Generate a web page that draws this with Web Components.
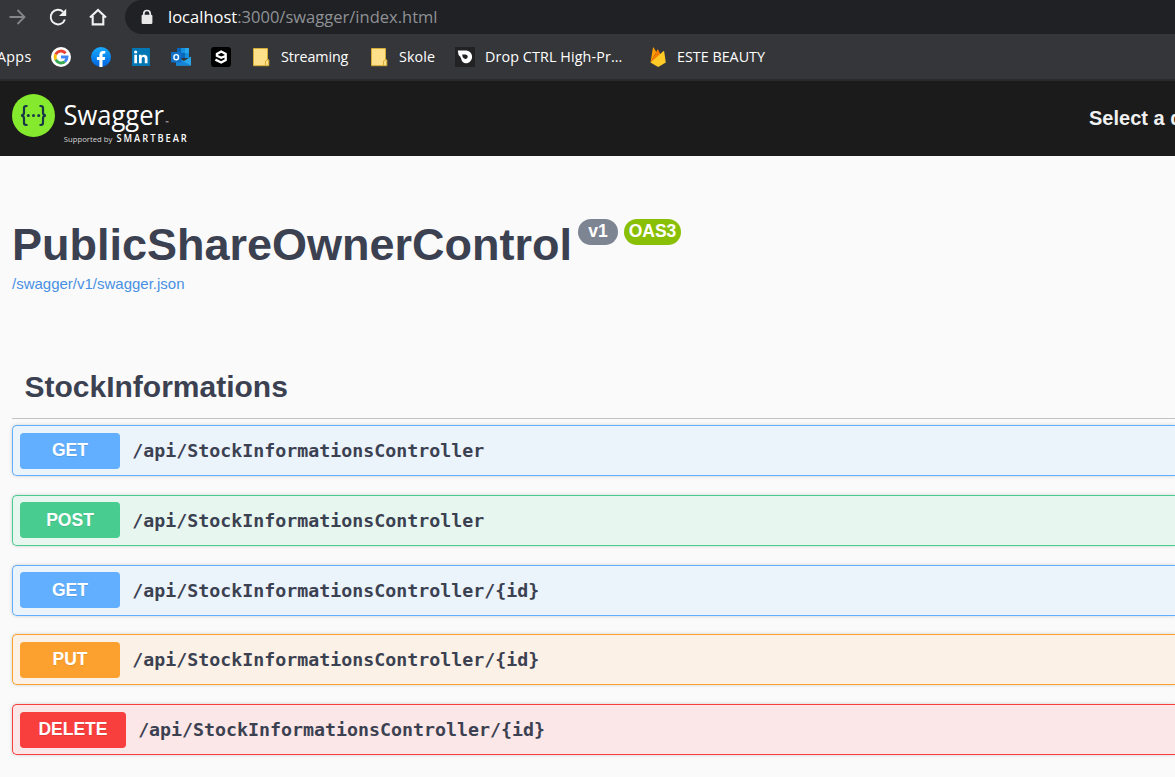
<!DOCTYPE html>
<html lang="en">
<head>
<meta charset="utf-8">
<title>Swagger UI</title>
<style>
html,body{margin:0;height:100%;overflow:hidden;background:#fafafa}
body{font-family:"Liberation Sans",Arial,sans-serif;color:#3b4151}
</style>
</head>
<body>
<app-window></app-window>
<script>
const define=(name,html,init)=>customElements.define(name,class extends HTMLElement{
  connectedCallback(){
    if(this.shadowRoot)return;
    this.attachShadow({mode:"open"}).innerHTML=html;
    if(init)init.call(this,this.shadowRoot);
  }
});

// One line of text whose letter spacing is tuned to a given width.
define("fit-text",`<style>
:host{display:block;white-space:nowrap}
span{display:inline-block}
</style><span><slot></slot></span>`,function(root){
  const s=root.querySelector("span"),n=this.textContent.length;
  const w=s.getBoundingClientRect().width;
  s.style.letterSpacing=((+this.getAttribute("width")-w)/n)+"px";
});

const icons={
forward:`<path d="M1.5 10H16M9.5 3l7 7-7 7" fill="none" stroke="#85868a" stroke-width="1.8"/>`,
reload:`<path d="M16.9 12.5A7.3 7.3 0 1 1 15.2 4.9" fill="none" stroke="#f1f1f2" stroke-width="2"/><path d="M18.2 1.8V9H11z" fill="#f1f1f2"/>`,
home:`<path d="M2 10.6 10 3l8 7.600M4.700 9V17.400H15.300V9" fill="none" stroke="#f1f1f2" stroke-width="2.100"/>`,
lock:`<path d="M6.800 9V6.700a3.200 3.200 0 0 1 6.400 0V9" fill="none" stroke="#e8e8e9" stroke-width="1.700"/><rect x="4.600" y="7.800" width="10.800" height="9.200" rx="1.200" fill="#e8e8e9"/>`,
google:`<circle cx="10" cy="10" r="10" fill="#fff"/><g fill="none" stroke-width="2.900"><path d="M14.600 6.200A6 6 0 0 0 4.700 7.300" stroke="#ea4335"/><path d="M4.700 7.300a6 6 0 0 0 0 5.400" stroke="#fbbc05"/><path d="M4.700 12.700a6 6 0 0 0 9.200 1.900" stroke="#34a853"/><path d="M10 10h6a6 6 0 0 1-2.100 4.600" stroke="#4285f4"/></g>`,
facebook:`<defs><linearGradient id="f" x2="0" y2="1"><stop stop-color="#18acfe"/><stop offset="1" stop-color="#0163e0"/></linearGradient></defs><circle cx="10" cy="10" r="10" fill="url(#f)"/><path d="M8.400 20v-7H5.900v-3h2.500V7.900c0-2.600 1.500-4 3.800-4 1.100 0 2.100.2 2.100.2v2.500h-1.200c-1.200 0-1.600.8-1.600 1.500V10h2.700l-.5 3h-2.200v7z" fill="#fff"/>`,
linkedin:`<rect x="1" y="1" width="18" height="18" rx=".5" fill="#0077b5"/><path d="M3.300 7.800H6v8.500H3.300zM8 7.800h2.600v1.200c1.200-2 5.900-2 5.900 2.100v5.200h-2.700v-4.600c0-2.200-3.100-2-3.100 0v4.600H8z" fill="#fff"/><circle cx="4.650" cy="5" r="1.600" fill="#fff"/>`,
outlook:`<path d="M6 1h12v9H6z" fill="#0364b8"/><path d="M10 1h4v5h-4z" fill="#1490df"/><path d="M14 1h4v5h-4z" fill="#28a8ea"/><path d="M10 6h4v5h-4z" fill="#0a66b8"/><path d="M14 6h4v5h-4z" fill="#1490df"/><path d="M5 10l8 4 7-4.500V18.500H5z" fill="#28a8ea"/><path d="M5 10.500 20 18.500H5z" fill="#1685d8"/><rect y="5" width="10.500" height="10.500" rx=".8" fill="#0f70c8"/><ellipse cx="5.200" cy="10.200" rx="2.300" ry="2.600" fill="none" stroke="#fff" stroke-width="1.400"/>`,
ninegag:`<rect width="20" height="20" rx="3" fill="#000"/><path d="M15 8.700 10.200 10.800 5.900 8.700V6.900L10.200 4.600 14.700 6.900V13L10.200 15.500 4.400 12.600" fill="none" stroke="#fff" stroke-width="2.300"/>`,
folder:`<path d="M2.500 1.500h14v11.300h1.300v5.900H2.500z" fill="#fee08a" stroke="#d5ad34"/><path d="M14.500 18.300v-4.200l2-1.300" fill="none" stroke="#d9ad31" stroke-width="1"/>`,
drop:`<rect width="20" height="20" fill="#222224"/><path d="M2.800 3.500h7.300c4.300 0 7 2.700 7 6.200 0 3.400-2.600 6.600-6.400 6.600C9 16.300 7 15 6.400 12.500 5.800 10 4.500 9 3.500 7.800z" fill="#fff"/><path d="M7.200 7.600h3c1.700 0 2.500 1 2.500 2.100s-.8 2.200-2.300 2.200c-1.700 0-3.100-1.200-3.200-4.300z" fill="#222224"/>`,
firebase:`<path d="M2.500 15.500 4.900.9c.1-.5.700-.5.900-.1L8.200 5z" fill="#ffa000"/><path d="M2.500 15.500 9.300 2.800c.2-.4.700-.4.900 0l4 8z" fill="#f57c00"/><path d="M2.500 15.500 15.300 4.200c.3-.3.800-.1.900.3l1.600 11-6.700 3.900c-.6.300-1.200.3-1.800 0z" fill="#ffca28"/>`
};
define("ui-icon",`<style>
:host{display:block;flex:none;width:20px;height:20px}svg{display:block}
</style><svg width="20" height="20" viewBox="0 0 20 20"></svg>`,function(root){
  root.querySelector("svg").innerHTML=icons[this.getAttribute("name")];
});

define("browser-toolbar",`<style>
:host{display:flex;height:34px;background:#35363a;align-items:center;padding-left:8px;
font:16.500px/34px "Open Sans","Noto Sans",sans-serif;color:#8f9296}
.nav{display:flex;gap:20px;width:117px;flex:none}
.address{display:flex;align-items:center;flex:1;height:34px;box-sizing:border-box;padding-left:12px;gap:11px;background:#202124;border-radius:17px 0 0 17px}
b{font-weight:400;color:#fff}
</style>
<div class="nav"><ui-icon name="forward"></ui-icon><ui-icon name="reload"></ui-icon><ui-icon name="home"></ui-icon></div>
<div class="address"><ui-icon name="lock"></ui-icon><fit-text width="269.5"><b>localhost</b>:3000/swagger/index.html</fit-text></div>`);

define("bookmark-item",`<style>:host{display:flex;flex:none;gap:10px;align-items:center}</style><slot></slot>`);

define("bookmarks-bar",`<style>
:host{display:flex;height:45px;background:#35363a;border-bottom:2px solid #292a2c;align-items:center;
gap:20px;font:14.300px/20px "Open Sans","Noto Sans",sans-serif;color:#fff;overflow:hidden}
.apps{width:34px;margin:0 0 0 -3px}
.stream{width:68px}
.drop{width:143px}
.este{margin-left:-1px}
</style>
<fit-text class="apps" width="34.5">Apps</fit-text>
<ui-icon name="google"></ui-icon><ui-icon name="facebook"></ui-icon><ui-icon name="linkedin"></ui-icon><ui-icon name="outlook"></ui-icon><ui-icon name="ninegag"></ui-icon>
<bookmark-item><ui-icon name="folder"></ui-icon><fit-text class="stream" width="67.3">Streaming</fit-text></bookmark-item>
<bookmark-item><ui-icon name="folder"></ui-icon><fit-text width="36">Skole</fit-text></bookmark-item>
<bookmark-item><ui-icon name="drop"></ui-icon><fit-text class="drop" width="137.5">Drop CTRL High-Pr...</fit-text></bookmark-item>
<bookmark-item><ui-icon name="firebase"></ui-icon><fit-text class="este" width="88">ESTE BEAUTY</fit-text></bookmark-item>`);

define("swagger-logo",`<style>:host{display:block}svg{display:block}text{font-family:"Open Sans",sans-serif;fill:#fff}</style>
<svg width="190" height="75" viewBox="0 0 190 75">
<circle cx="33.500" cy="34.500" r="21.500" fill="#85ea2d"/>
<g fill="none" stroke="#173647" stroke-width="2.200"><path d="M27.500 25h-1.300q-2.200 0-2.200 2.200v4.300q0 3-3 3 3 0 3 3v4.300q0 2.200 2.200 2.200h1.300"/><path d="M39.500 25h1.300q2.200 0 2.200 2.200v4.300q0 3 3 3-3 0-3 3v4.300q0 2.200-2.200 2.200h-1.300"/></g>
<g fill="#173647"><circle cx="28.300" cy="34.500" r="1.500"/><circle cx="33.500" cy="34.500" r="1.500"/><circle cx="38.700" cy="34.500" r="1.500"/></g>
<text x="63.500" y="43.500" font-size="27" textLength="100.500" lengthAdjust="spacingAndGlyphs">Swagger</text>
<text x="165.500" y="43" font-size="4">™</text>
<text x="63.800" y="61" font-size="7.800" textLength="48.500" lengthAdjust="spacingAndGlyphs" style="fill:#d5d5d5">Supported by</text>
<g transform="translate(116.500 61) scale(.93 1)"><text font-size="10" font-weight="600" textLength="75.500">SMARTBEAR</text></g>
</svg>`);

define("swagger-topbar",`<style>
:host{display:flex;height:75px;background:#1b1b1b;justify-content:space-between;overflow:hidden}
label{width:86px;flex:none;white-space:nowrap;font:bold 20px/75px "Liberation Sans",Arial,sans-serif;color:#f0f0f0}
</style><swagger-logo></swagger-logo><label>Select a definition</label>`);

define("version-badge",`<style>
:host{display:block;box-sizing:border-box;height:26px;border-radius:13px;background:var(--badge,#7d8492);color:#fff;
font:bold 17.500px/24px "Liberation Sans",Arial,sans-serif;text-align:center;width:var(--w,40px)}
</style><slot></slot>`);

define("api-info",`<style>
:host{display:block;padding:63px 12px 0;height:139px}
header{display:flex;gap:6px}
h2{margin:0;font:bold 45px/52px "Liberation Sans",Arial,sans-serif}
a{display:block;margin-top:4px;font-size:15px;line-height:18px;color:#4990e2}
</style>
<header><h2><fit-text width="560">PublicShareOwnerControl</fit-text></h2><version-badge>v1</version-badge><version-badge style="--badge:#89bf04;--w:57px">OAS3</version-badge></header>
<a><fit-text width="172.5">/swagger/v1/swagger.json</fit-text></a>`);

define("api-operation",`<style>
:host{--c:#61affe;--bg:#ebf3fb;display:flex;align-items:flex-start;box-sizing:border-box;height:51px;margin-bottom:18.700px;padding:6.500px 7px 6px;
border:1px solid var(--c);border-right:0;border-radius:5px 0 0 5px;background:var(--bg);box-shadow:0 0 3.750px rgba(0,0,0,.19)}
:host([method=POST]){--c:#49cc90;--bg:#e8f6f0}
:host([method=PUT]){--c:#fca130;--bg:#fbf1e6}
:host([method=DELETE]){--c:#f93e3e;--bg:#fbe7e7}
.m{box-sizing:border-box;min-width:100px;height:36px;padding:.550px 18.400px 0;border-radius:3.750px;background:var(--c);color:#fff;
font:bold 17.500px/34.800px "Liberation Sans",Arial,sans-serif;text-align:center;text-shadow:0 1px 0 rgba(0,0,0,.1)}
.p{padding:.550px 0 0 12.300px;font:bold 18.270px/36.600px "DejaVu Sans Mono",monospace;white-space:nowrap}
</style><div class="m"></div><div class="p"><slot></slot></div>`,function(root){
  root.querySelector(".m").textContent=this.getAttribute("method");
});

define("api-section",`<style>
:host{display:block;margin-left:12px}
h4{margin:0 0 6.250px;box-sizing:border-box;height:61px;padding-left:12.500px;border-bottom:1px solid rgba(59,65,81,.3);font:bold 30px/57px "Liberation Sans",Arial,sans-serif}
</style><h4><fit-text width="263"><slot name="title"></slot></fit-text></h4><slot></slot>`);

define("app-window",`<style>:host{display:block;width:100%;height:777px;overflow:hidden}</style>
<browser-toolbar></browser-toolbar><bookmarks-bar></bookmarks-bar><swagger-topbar></swagger-topbar>
<api-info></api-info>
<api-section><span slot="title">StockInformations</span>
<api-operation method="GET">/api/StockInformationsController</api-operation>
<api-operation method="POST">/api/StockInformationsController</api-operation>
<api-operation method="GET">/api/StockInformationsController/{id}</api-operation>
<api-operation method="PUT">/api/StockInformationsController/{id}</api-operation>
<api-operation method="DELETE">/api/StockInformationsController/{id}</api-operation>
</api-section>`);
</script>
</body>
</html>
